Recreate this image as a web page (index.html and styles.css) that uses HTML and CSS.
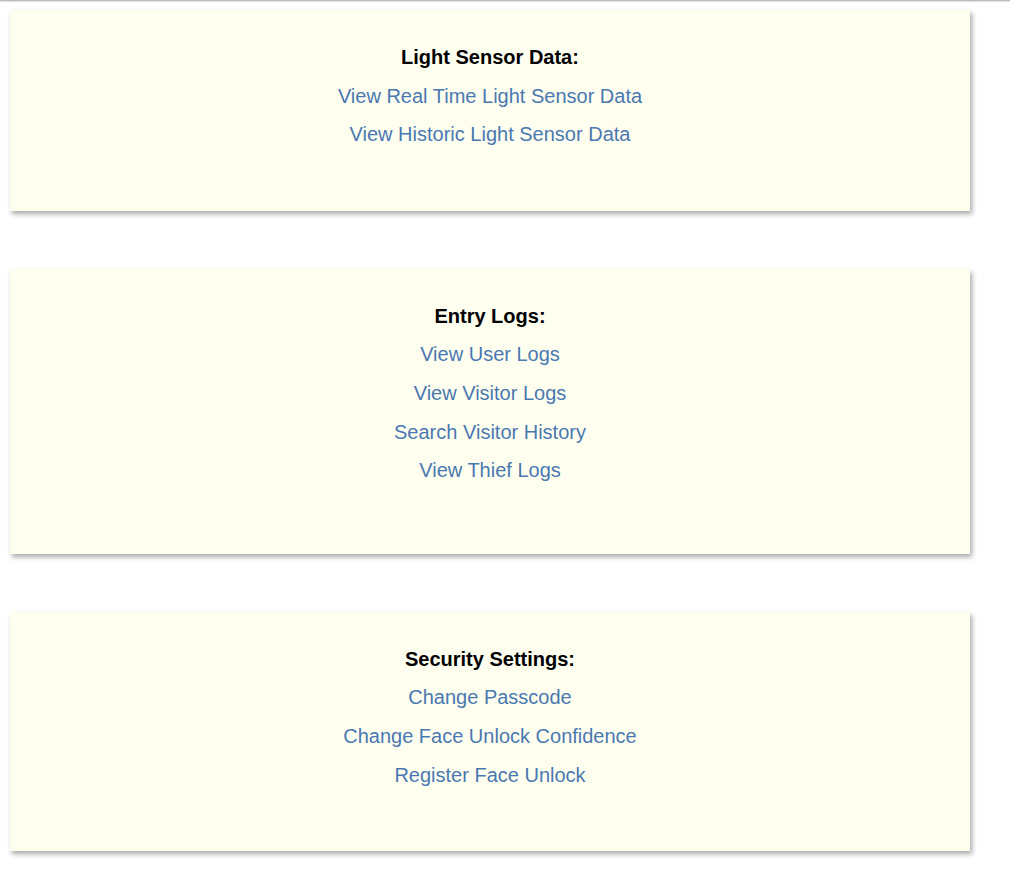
FILE: index.html
```html
<!DOCTYPE html>
<html>
<head>
<meta charset="utf-8">
<link rel="stylesheet" href="styles.css">
</head>
<body>
<div class="topline"></div>
<main class="page">
  <section class="card">
    <div class="title">Light Sensor Data:</div>
    <a class="link" href="#">View Real Time Light Sensor Data</a>
    <a class="link" href="#">View Historic Light Sensor Data</a>
  </section>
  <section class="card card-tall">
    <div class="title">Entry Logs:</div>
    <a class="link" href="#">View User Logs</a>
    <a class="link" href="#">View Visitor Logs</a>
    <a class="link" href="#">Search Visitor History</a>
    <a class="link" href="#">View Thief Logs</a>
  </section>
  <section class="card">
    <div class="title">Security Settings:</div>
    <a class="link" href="#">Change Passcode</a>
    <a class="link" href="#">Change Face Unlock Confidence</a>
    <a class="link" href="#">Register Face Unlock</a>
  </section>
</main>
</body>
</html>
```
FILE: styles.css
```css
html, body {
  margin: 0;
  padding: 0;
  background: #ffffff;
  font-family: "Liberation Sans", Arial, sans-serif;
}
.topline {
  height: 1px;
  background: #bdbdbd;
  border-bottom: 1px solid #e2e2e2;
}
.page {
  display: flex;
  flex-direction: column;
  gap: 58px;
  width: 960px;
  padding: 8px 0 20px 10px;
}
.card {
  background: #fffff0;
  box-shadow: 2px 3px 5px rgba(0, 0, 0, 0.35);
  display: flex;
  flex-direction: column;
  align-items: center;
  padding: 28px 0 57px;
}
.card-tall {
  padding-bottom: 64px;
}
.title {
  font-weight: bold;
  font-size: 20px;
  line-height: 38.6px;
  color: #000;
}
.link {
  font-size: 20px;
  line-height: 38.6px;
  color: #4a78b0;
  text-decoration: none;
}
```
